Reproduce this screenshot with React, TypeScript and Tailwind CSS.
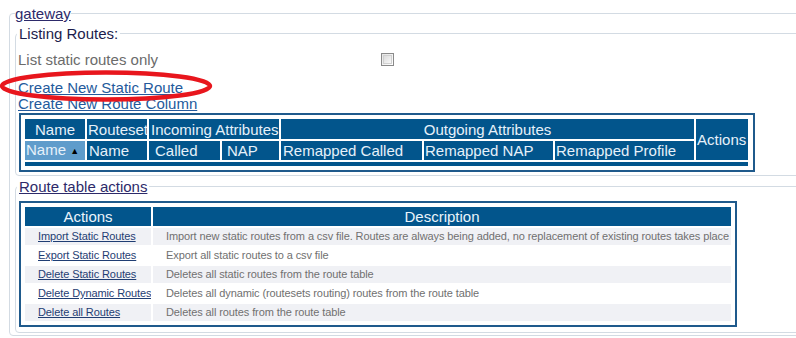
import React from "react";

const font = { fontFamily: '"Liberation Sans", Arial, sans-serif' };

const actions = [
  {
    label: "Import Static Routes",
    desc: "Import new static routes from a csv file. Routes are always being added, no replacement of existing routes takes place",
  },
  { label: "Export Static Routes", desc: "Export all static routes to a csv file" },
  { label: "Delete Static Routes", desc: "Deletes all static routes from the route table" },
  { label: "Delete Dynamic Routes", desc: "Deletes all dynamic (routesets routing) routes from the route table" },
  { label: "Delete all Routes", desc: "Deletes all routes from the route table" },
];

function RoutesTable() {
  const th = "bg-[#02558c] text-[#e6f1fa] font-normal text-[15px] leading-[17px] p-0 whitespace-nowrap overflow-hidden";
  return (
    <div className="ml-[2px] w-[736px] border-2 border-[#1f5a8c] p-[2px] pr-[3px]">
      <table className="w-full table-fixed border-separate border-spacing-[2px]">
        <colgroup>
          <col className="w-[60px]" />
          <col className="w-[60px]" />
          <col className="w-[71px]" />
          <col className="w-[57px]" />
          <col className="w-[141px]" />
          <col className="w-[129px]" />
          <col className="w-[139px]" />
          <col className="w-[52px]" />
        </colgroup>
        <thead>
          <tr className="h-[20px]">
            <th className={`${th} text-center`}>Name</th>
            <th className={`${th} text-left pl-[1px]`}>Routeset</th>
            <th colSpan={2} className={`${th} text-left pl-[2px]`}>Incoming Attributes</th>
            <th colSpan={3} className={`${th} text-center`}>Outgoing Attributes</th>
            <th rowSpan={2} className={`${th} text-left pl-[1px]`}>Actions</th>
          </tr>
          <tr className="h-[19px]">
            <th className={`${th} !bg-[#5f9ccb] text-left pl-[1px]`}>
              Name <span className="text-[9px] text-black align-[1px]">▲</span>
            </th>
            <th className={`${th} text-left pl-[2px]`}>Name</th>
            <th className={`${th} text-left pl-[6px]`}>Called</th>
            <th className={`${th} text-left pl-[5px]`}>NAP</th>
            <th className={`${th} text-left pl-[2px]`}>Remapped Called</th>
            <th className={`${th} text-left pl-[1px]`}>Remapped NAP</th>
            <th className={`${th} text-left pl-[1px]`}>Remapped Profile</th>
          </tr>
        </thead>
        <tfoot>
          <tr className="h-[4px]">
            <td colSpan={8} className="bg-[#02558c] p-0 h-[4px]" />
          </tr>
        </tfoot>
      </table>
    </div>
  );
}

function ActionsTable() {
  const small = "p-0 pl-[13px] text-[11px] leading-[13px] tracking-[-0.1px] whitespace-nowrap overflow-hidden";
  return (
    <div className="ml-[2px] w-[718px] border-2 border-[#1f5a8c] p-[2px]">
      <table className="w-full table-fixed border-separate border-spacing-[2px]">
        <colgroup>
          <col className="w-[126px]" />
          <col className="w-[578px]" />
        </colgroup>
        <thead>
          <tr className="h-[19px]">
            <th className="bg-[#02558c] text-[#eaf4fb] font-normal text-[15px] leading-[17px] p-0">Actions</th>
            <th className="bg-[#02558c] text-[#eaf4fb] font-normal text-[15px] leading-[17px] p-0">Description</th>
          </tr>
        </thead>
        <tbody>
          {actions.map((a, i) => (
            <tr key={a.label} className="h-[17px]">
              <td className={`${i % 2 === 0 ? "bg-[#f0f1f5]" : "bg-white"} ${small}`}>
                <a href="#" className="text-[#1f3d73] underline">
                  {a.label}
                </a>
              </td>
              <td className={`${i % 2 === 0 ? "bg-[#f0f1f5]" : "bg-white"} ${small} text-[#707070]`}>{a.desc}</td>
            </tr>
          ))}
        </tbody>
      </table>
    </div>
  );
}

export default function App() {
  return (
    <div className="relative w-[796px] h-[338px] overflow-hidden bg-white" style={font}>
      <fieldset className="mt-[5px] ml-[9px] w-[800px] border border-[#d3dbe3] rounded-[4px] pl-[5px] pb-[2px]">
        <legend className="text-[15px] leading-[17px] text-[#2d2a6a] underline px-0">gateway</legend>

        <fieldset className="mt-[3px] border border-[#d3dbe3] rounded-[4px] pl-[1px] pb-[3px]">
          <legend className="text-[15px] leading-[17px] text-[#1c1c4c] px-[2px]">Listing Routes:</legend>
          <div className="flex items-center h-[38px] pb-[4px]">
            <span className="w-[364px] pl-[1px] text-[15px] leading-[17px] text-[#6b6b6b]">List static routes only</span>
            <span className="w-[13px] h-[13px] border border-[#8a8a8a] bg-gradient-to-br from-[#e4e4e4] to-white p-[1px]">
              <span className="block w-full h-full border border-[#d0d0d0] bg-gradient-to-br from-[#dcdcdc] to-[#f8f8f8]" />
            </span>
          </div>
          <div className="flex flex-col items-start text-[15px] leading-[16px] pl-[1px]">
            <a href="#" className="text-[#245a9c] underline">Create New Static Route</a>
            <a href="#" className="text-[#245a9c] underline">Create New Route Column</a>
          </div>
          <div className="mt-[1px]">
            <RoutesTable />
          </div>
        </fieldset>

        <fieldset className="mt-[2px] border border-[#d3dbe3] rounded-[4px] pl-[1px] pb-[5px]">
          <legend className="text-[15px] leading-[17px] text-[#2d2a6a] underline px-[2px]">Route table actions</legend>
          <div className="mt-[6px]">
            <ActionsTable />
          </div>
        </fieldset>
      </fieldset>

      <svg className="absolute left-0 top-0 pointer-events-none" width="240" height="110" viewBox="0 0 240 110">
        <ellipse cx="106" cy="86" rx="104" ry="13.5" fill="none" stroke="#e8161d" strokeWidth="4.5" />
      </svg>
    </div>
  );
}
